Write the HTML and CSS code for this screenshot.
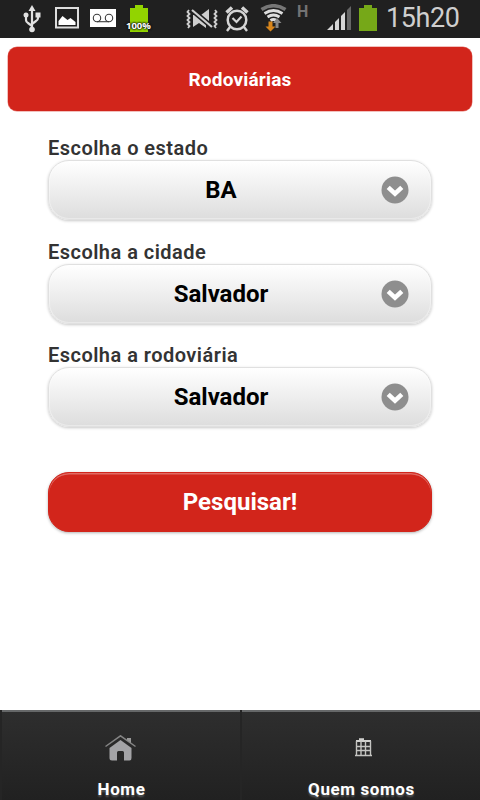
FILE: index.html
```html
<!DOCTYPE html>
<html lang="pt-BR">
<head>
<meta charset="utf-8">
<title>Rodoviárias</title>
<link rel="stylesheet" href="styles.css">
</head>
<body>
<div class="screen">
  <div class="status">
    <svg class="usb" width="18" height="28" viewBox="0 0 18 28" fill="none" stroke="#e2e2e2" stroke-width="2.2"><path d="M9 4v20M3 10v5q0 2 2 3l4 3M15 10v3q0 2-2 3l-4 3"/><path d="M9 0l3.5 6h-7z" fill="#e2e2e2" stroke="none"/><circle cx="3" cy="10" r="2.5" fill="#e2e2e2" stroke="none"/><path d="M12.5 7.5h5v5h-5z" fill="#e2e2e2" stroke="none"/><circle cx="9" cy="24.5" r="2.8" fill="#e2e2e2" stroke="none"/></svg>
    <svg class="photo" width="24" height="22" viewBox="0 0 24 22"><path d="M1 1h22v19.5H1z" fill="none" stroke="#dedede" stroke-width="2"/><path d="M3.500 18v-4l4-5 5 4 3-2 5 4v3z" fill="#fff"/></svg>
    <svg class="voice" width="26" height="18" viewBox="0 0 26 18"><path d="M0 0h26v18H0z" fill="#fff"/><g fill="none" stroke="#3a3a3a" stroke-width="1.1"><circle cx="7" cy="9" r="3.7"/><circle cx="19" cy="9" r="3.7"/><path d="M7 12.7h12"/></g></svg>
    <div class="charge"><svg width="18" height="27" viewBox="0 0 18 27"><path d="M0 3h5V0h8v3h5v24H0z" fill="#92d400"/></svg><span>100%</span></div>
    <svg class="mute" width="32" height="22" viewBox="0 0 32 22"><g fill="#cfcfcf"><path d="M7 7h4l9 8v5l-7-5-6 4z"/><path d="M15 7l8-6v14z"/></g><path d="M6 2l20 17" stroke="#202020" stroke-width="5"/><path d="M6 2l20 17" stroke="#cfcfcf" stroke-width="2.2"/><path d="M3 2l-1.500 2 2 2-2 2 2 2-2 2 2 2-2 2 2 2-1.500 2M29 2l1.500 2-2 2 2 2-2 2 2 2-2 2 2 2-2 2 1.500 2" fill="none" stroke="#cfcfcf" stroke-width="1.800"/></svg>
    <svg class="alarm" width="24" height="26" viewBox="0 0 24 26" fill="none" stroke="#d5d5d5"><circle cx="12" cy="14" r="9.3" stroke-width="2.5"/><path d="M7.5 12l4 4 5-5.5" stroke-width="2.2"/><path d="M1.5 6.5l5.5-5M22.5 6.5L17 1.5" stroke-width="3.5"/><path d="M5 21l-3 4M19 21l3 4" stroke-width="2.4"/></svg>
    <svg class="wifi" width="28" height="28" viewBox="0 0 28 28" fill="none"><path d="M1.500 5.500q12-7.500 24 0" stroke="#777" stroke-width="3.6"/><path d="M4.500 9.500q9-6 18 0M7.500 13q6-4 12 0M10.500 16.500q3-2 6 0" stroke="#ddd" stroke-width="2.8"/><path d="M8.500 17.500h4v5h3l-5 5-5-5h3z" fill="#d8861c"/><path d="M15.500 24h3v-5h3l-4.5-5-4 5h2.500z" fill="#888"/></svg>
    <span class="h">H</span>
    <svg class="signal" width="24" height="24" viewBox="0 0 24 24"><path d="M0 24l6-6v6zM8 24v-8l4-4v12zM14 24V10l4-4v18z" fill="#d6d6d6"/><path d="M20 24V4l4-4v24z" fill="#666"/></svg>
    <svg class="batt" width="18" height="26" viewBox="0 0 18 26"><path d="M0 3h5V0h8v3h5v23H0z" fill="#76a818"/></svg>
    <span class="clock">15h20</span>
  </div>
  <header class="title">Rodoviárias</header>
  <main class="form">
    <label for="uf">Escolha o estado</label>
    <button class="select" id="uf"><span>BA</span><svg width="28" height="28" viewBox="0 0 28 28"><circle cx="14" cy="14" r="13.5" fill="#8e8e8e"/><path d="M7.200 11.400l6.800 6.200 6.800-6.200" fill="none" stroke="#fff" stroke-width="4.600" stroke-linecap="butt"/></svg></button>
    <label for="city">Escolha a cidade</label>
    <button class="select" id="city"><span>Salvador</span><svg width="28" height="28" viewBox="0 0 28 28"><circle cx="14" cy="14" r="13.5" fill="#8e8e8e"/><path d="M7.200 11.400l6.800 6.200 6.800-6.200" fill="none" stroke="#fff" stroke-width="4.600" stroke-linecap="butt"/></svg></button>
    <label for="station">Escolha a rodoviária</label>
    <button class="select" id="station"><span>Salvador</span><svg width="28" height="28" viewBox="0 0 28 28"><circle cx="14" cy="14" r="13.5" fill="#8e8e8e"/><path d="M7.200 11.400l6.800 6.200 6.800-6.200" fill="none" stroke="#fff" stroke-width="4.600" stroke-linecap="butt"/></svg></button>
    <button class="submit">Pesquisar!</button>
  </main>
  <nav class="tabs">
    <a class="tab"><svg width="32" height="26" viewBox="0 0 32 26"><path d="M.5 11.5L15.500.8l15 10.700" fill="none" stroke="#858585" stroke-width="1.5"/><path d="M22 3h4v5l-4-3z" fill="#9a9a9a"/><path d="M4.500 13l11-8 11 8v10q0 2.500-2 2.500H19v-8q0-1.500-1.500-1.500h-4q-1.500 0-1.500 1.500v8H7q-2.500 0-2.500-2.500z" fill="#a3a3a6"/></svg><span>Home</span></a>
    <a class="tab"><svg width="32" height="26" viewBox="0 0 32 26"><path d="M14 3.500h5" stroke="#858585" stroke-width="1"/><path d="M14 4.500h5M11 6h15" stroke="#d0d0cd" stroke-width="2"/><path d="M11.500 6v15M16 6v15M20.500 6v15M25.500 6v15M11 11.500h15M11 15.500h15M10 20.500h17" stroke="#c4c4c1" stroke-width="1.400" fill="none"/></svg><span>Quem somos</span></a>
  </nav>
</div>
</body>
</html>
```
FILE: styles.css
```css
* { box-sizing: border-box; }
body { margin: 0; background: #fff; font-family: Roboto, "Liberation Sans", sans-serif; }
svg { display: block; flex: none; }
.screen { width: 480px; height: 800px; display: flex; flex-direction: column; overflow: hidden; }
.status { height: 38px; flex: none; background: #202020; display: flex; align-items: flex-start; padding-left: 23px; }
.usb { margin-top: 5px; }
.photo { margin: 7px 0 0 14px; }
.voice { margin: 9px 0 0 11px; }
.charge { position: relative; margin: 5px 0 0 14px; }
.charge span { position: absolute; left: -4px; top: 15px; font: bold 9.500px/12px "Open Sans", sans-serif; color: #fff; text-shadow: 0 0 2px #111, 0 0 2px #111, 0 0 2px #111; }
.mute { margin: 8px 0 0 38px; }
.alarm { margin: 6px 0 0 7px; }
.wifi { margin: 4px 0 0 11px; }
.h { margin: 2px 0 0 9px; width: 11px; font-size: 16px; line-height: 19px; font-weight: 700; color: #737373; }
.signal { margin: 6px 0 0 19px; }
.batt { margin: 5px 0 0 8px; }
.clock { margin: 2px 0 0 9px; font-size: 27px; line-height: 32px; letter-spacing: -.4px; color: #cfcfcf; }
.title { height: 64px; flex: none; margin: 9px 8px 0 8px; border-radius: 9px; background: #d2251b; color: #fff; font-size: 19px; font-weight: 700; letter-spacing: .2px; line-height: 65px; text-align: center; box-shadow: 0 0 0 .5px #e6827c; }
.form { flex: 1; display: flex; flex-direction: column; padding: 25px 48px 0; }
label { height: 24px; line-height: 24px; font-size: 20px; font-weight: 600; letter-spacing: .47px; color: #333; white-space: nowrap; }
.select, .submit { width: 100%; height: 60px; flex: none; border-radius: 21px; font-family: inherit; font-size: 24px; font-weight: 700; text-align: center; }
.select { display: flex; align-items: center; padding: 0 22px 0 12px; margin-bottom: 19.500px; border: 1px solid #e0e0e0; color: #000; background: linear-gradient(#fff, #ddd) padding-box; box-shadow: 0 1px 3px rgba(0,0,0,.22), inset 0 0 0 1px rgba(255,255,255,.35); }
.select span { flex: 1; }
.submit { margin-top: 25.500px; border: 1px solid #d2251b; background: #d2251b; color: #fff; box-shadow: 0 1px 3px rgba(0,0,0,.3), inset 0 1.500px 0 #e06a63; }
.tabs { height: 90px; flex: none; display: flex; padding-left: 2px; background: #252525; }
.tab { flex: 1; display: flex; flex-direction: column; align-items: center; padding-top: 23px; border-top: 2px solid #666869; background: linear-gradient(#2e2e2e, #212121); color: #fff; }
.tab + .tab { margin-left: 2px; }
.tab span { margin-top: 16px; font-size: 17px; line-height: 24px; font-weight: 700; letter-spacing: .6px; padding-left: 1px; text-shadow: 0 2px 2px rgba(255,255,255,.25); }
```
